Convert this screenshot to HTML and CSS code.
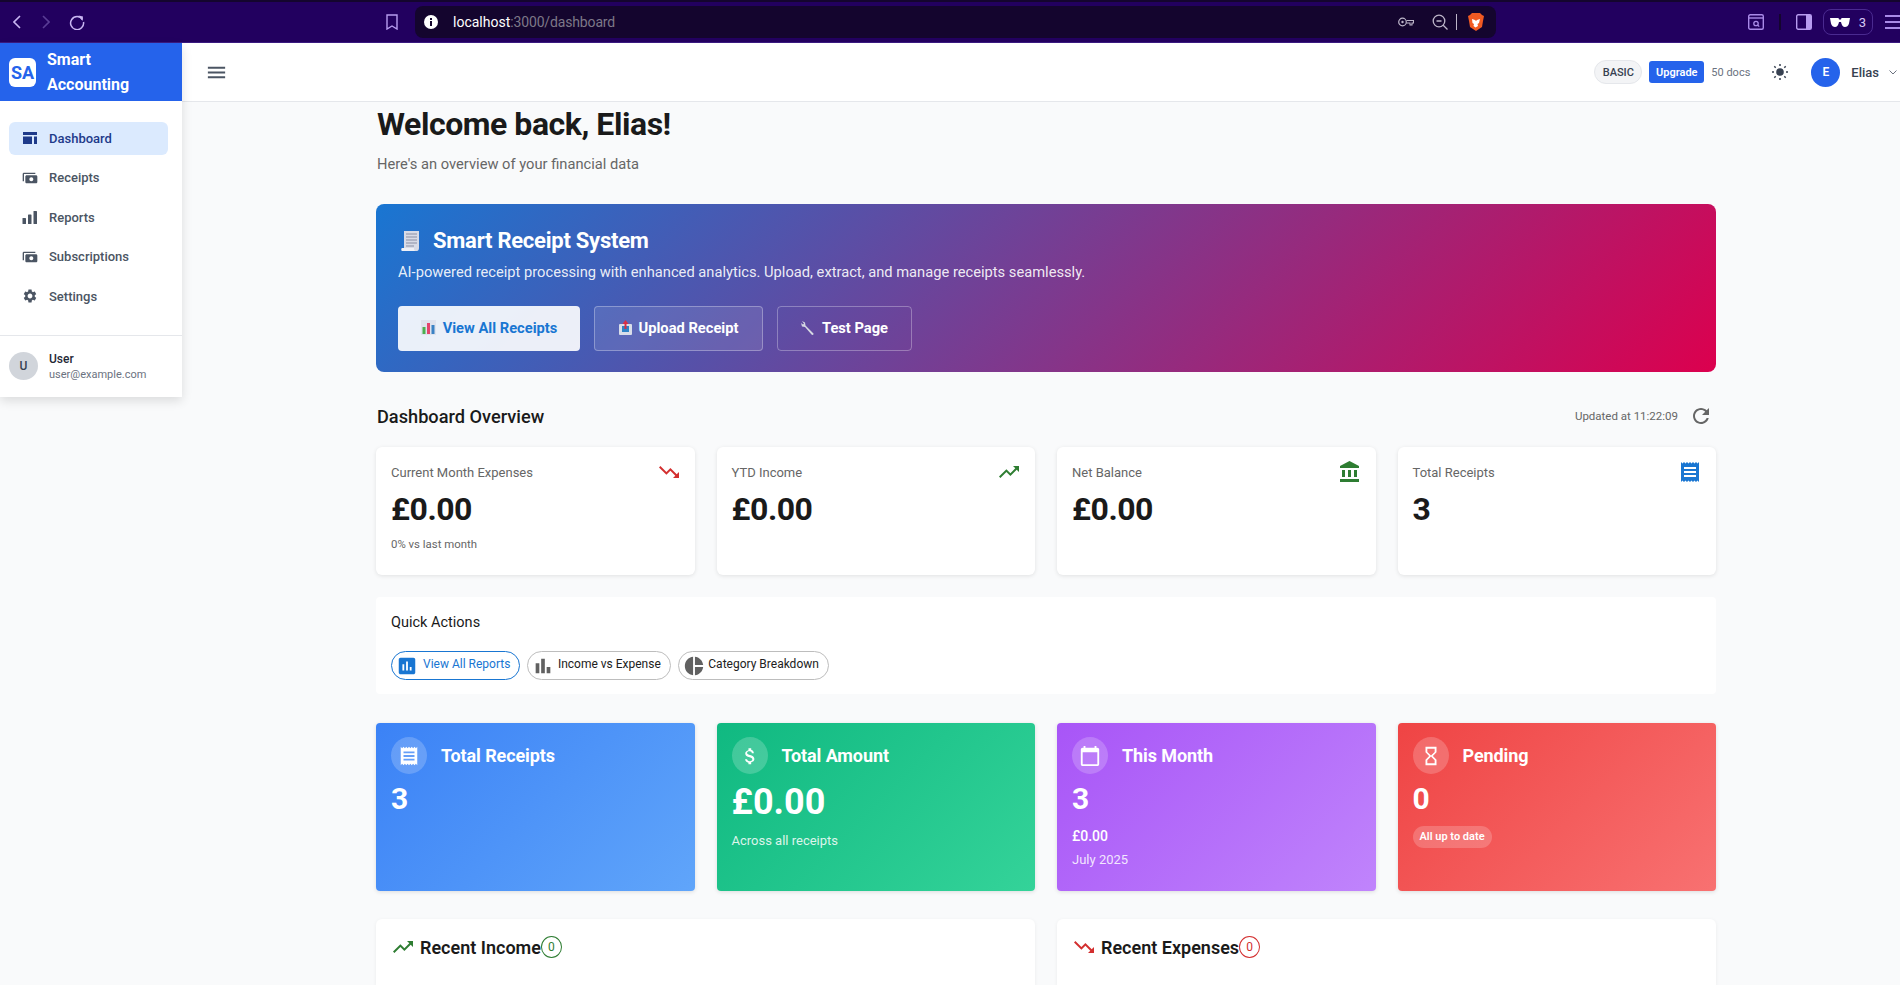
FILE: index.html
```html
<!DOCTYPE html>
<html lang="en">
<head>
    <meta charset="UTF-8">
    <meta name="viewport" content="width=device-width, initial-scale=1.0">
    <title>Smart Accounting Dashboard</title>
    <link rel="stylesheet" href="styles.css">
</head>
<body>
    <!-- browser toolbar -->
    <div class="chrome">
        <svg class="c-ico c-back" viewBox="0 0 8 14" width="8" height="14"><path d="M7 1L1 7l6 6" fill="none" stroke="#c9b6f2" stroke-width="1.6"/></svg>
        <svg class="c-ico c-forward" viewBox="0 0 8 14" width="8" height="14"><path d="M1 1l6 6-6 6" fill="none" stroke="#5a3d96" stroke-width="1.6"/></svg>
        <svg class="c-ico c-reload" viewBox="0 0 16 16" width="16" height="16"><path d="M13.5 5.5A6.5 6.5 0 1 0 14.5 8" fill="none" stroke="#c9b6f2" stroke-width="1.5"/><path d="M9.5 1.5l4.5 1-.5 4.5z" fill="#c9b6f2"/></svg>
        <svg class="c-ico c-bookmark" viewBox="0 0 12 16" width="12" height="16"><path d="M1 1h10v14l-5-3-5 3z" fill="none" stroke="#b79cf0" stroke-width="1.4"/></svg>
        <div class="address">
            <svg viewBox="0 0 14 14" width="14" height="14"><circle cx="7" cy="7" r="7" fill="#fff"/><rect x="6" y="6" width="2" height="5" fill="#14052e"/><rect x="6" y="3" width="2" height="2" fill="#14052e"/></svg>
            <span class="url"><b>localhost</b>:3000/dashboard</span>
            <svg class="a-key" viewBox="0 0 16 10" width="16" height="10"><circle cx="4.5" cy="5" r="3.8" fill="none" stroke="#bdb6c9" stroke-width="1.2"/><circle cx="4.5" cy="5" r="1.2" fill="#bdb6c9"/><path d="M8.5 3.5H15.5V6H14V8H12V6H8.5" fill="none" stroke="#bdb6c9" stroke-width="1.1"/></svg>
            <svg class="a-zoom" viewBox="0 0 16 16" width="16" height="16"><circle cx="7" cy="7" r="5.8" fill="none" stroke="#bdb6c9" stroke-width="1.3"/><path d="M4.5 7h5M11.2 11.2L15.5 15.5" stroke="#bdb6c9" stroke-width="1.3"/></svg>
            <span class="a-sep"></span>
            <svg viewBox="0 0 16 18" width="16" height="18"><path d="M4 0h8l2 2 2 1-1 5-1 6-6 4-6-4-1-6-1-5 2-1z" fill="#f15a22"/><path d="M4 6l3 1 1 1 1-1 3-1-1 4-1.5 1 .5 2-2.500 1.500L5.500 13l.5-2-1.500-1z" fill="#fff"/></svg>
        </div>
        <svg class="c-ico c-search" viewBox="0 0 16 16" width="16" height="16"><rect x=".7" y=".7" width="14.600" height="14.600" rx="1.500" fill="none" stroke="#a98ae8" stroke-width="1.400"/><path d="M1 4h14" stroke="#a98ae8" stroke-width="1.400"/><circle cx="8" cy="9.500" r="2.200" fill="none" stroke="#a98ae8" stroke-width="1.300"/><path d="M9.600 11l1.600 1.600" stroke="#a98ae8" stroke-width="1.300"/></svg>
        <span class="c-sep"></span>
        <svg class="c-ico c-panel" viewBox="0 0 16 16" width="16" height="16"><rect x=".7" y=".7" width="14.600" height="14.600" rx="1.500" fill="none" stroke="#b79cf0" stroke-width="1.400"/><rect x="10" y="1" width="5" height="14" fill="#b79cf0"/></svg>
        <div class="private">
            <svg viewBox="0 0 20 9" width="20" height="9"><path d="M0 0h8.500l.5 1.500h2L11.500 0H20l-1 5.500C18.500 8 16.500 9 15 9c-2 0-3.500-2-4-5H9c-.5 3-2 5-4 5-1.500 0-3.500-1-4-3.500z" fill="#fff"/></svg>
            <span>3</span>
        </div>
        <div class="c-menu"><i></i><i></i><i></i></div>
    </div>

    <div class="app">
        <aside class="sidebar">
            <div class="brand">
                <div class="logo">SA</div>
                <div class="brand-name">Smart<br>Accounting</div>
            </div>
            <nav class="nav">
                <a class="nav-item active">
                    <svg viewBox="0 0 14 12" width="14" height="12"><path d="M0 0h14v3H0zM0 4.500h9V12H0zM11 4.500h3V12h-3z" fill="#1e3a8a"/></svg>
                    Dashboard
                </a>
                <a class="nav-item">
                    <svg viewBox="0 0 24 24" width="16" height="16"><path transform="rotate(180 12 12)" d="M19 14V6c0-1.100-.9-2-2-2H3c-1.100 0-2 .9-2 2v8c0 1.100.9 2 2 2h14c1.100 0 2-.9 2-2zm-9-1c-1.660 0-3-1.340-3-3s1.340-3 3-3 3 1.340 3 3-1.340 3-3 3zm13-6v11c0 1.100-.9 2-2 2H4v-2h17V7h2z" fill="#4b5563"/></svg>
                    Receipts
                </a>
                <a class="nav-item">
                    <svg viewBox="0 0 15 13" width="15" height="13"><rect x="0" y="7" width="3.500" height="6" rx=".6" fill="#4b5563"/><rect x="5.500" y="3.500" width="3.500" height="9.500" rx=".6" fill="#4b5563"/><rect x="11" y="0" width="3.500" height="13" rx=".6" fill="#4b5563"/></svg>
                    Reports
                </a>
                <a class="nav-item">
                    <svg viewBox="0 0 24 24" width="16" height="16"><path transform="rotate(180 12 12)" d="M19 14V6c0-1.100-.9-2-2-2H3c-1.100 0-2 .9-2 2v8c0 1.100.9 2 2 2h14c1.100 0 2-.9 2-2zm-9-1c-1.660 0-3-1.340-3-3s1.340-3 3-3 3 1.340 3 3-1.340 3-3 3zm13-6v11c0 1.100-.9 2-2 2H4v-2h17V7h2z" fill="#4b5563"/></svg>
                    Subscriptions
                </a>
                <a class="nav-item">
                    <svg viewBox="0 0 24 24" width="18" height="18"><path d="M19.140 12.940c.04-.3.06-.61.06-.94 0-.32-.02-.64-.07-.94l2.030-1.580c.18-.14.23-.41.12-.61l-1.920-3.320c-.12-.22-.37-.29-.59-.22l-2.390.96c-.5-.38-1.030-.7-1.620-.94l-.36-2.540c-.04-.24-.24-.41-.48-.41h-3.840c-.24 0-.43.17-.47.41l-.36 2.540c-.59.24-1.130.57-1.620.94l-2.390-.96c-.22-.08-.47 0-.59.22L2.740 8.870c-.12.21-.08.47.12.61l2.030 1.580c-.05.3-.09.63-.09.94s.02.64.07.94l-2.030 1.580c-.18.14-.23.41-.12.61l1.920 3.320c.12.22.37.29.59.22l2.390-.96c.5.38 1.030.7 1.620.94l.36 2.540c.05.24.24.41.48.41h3.840c.24 0 .44-.17.47-.41l.36-2.540c.59-.24 1.130-.56 1.620-.94l2.390.96c.22.08.47 0 .59-.22l1.920-3.320c.12-.22.07-.47-.12-.61l-2.010-1.580zM12 15.600c-1.980 0-3.600-1.620-3.600-3.600s1.620-3.600 3.600-3.600 3.600 1.620 3.600 3.600-1.620 3.600-3.600 3.600z" fill="#4b5563"/></svg>
                    Settings
                </a>
            </nav>
            <div class="side-user">
                <div class="side-avatar">U</div>
                <div class="side-text">
                    <div class="side-name">User</div>
                    <div class="side-mail">user@example.com</div>
                </div>
            </div>
        </aside>

        <div class="main">
            <header class="topbar">
                <svg class="menu-btn" viewBox="0 0 24 24" width="23" height="23"><path d="M3 18h18v-2H3v2zm0-5h18v-2H3v2zm0-7v2h18V6H3z" fill="#4b5563"/></svg>
                <span class="plan">BASIC</span>
                <button class="upgrade">Upgrade</button>
                <span class="docs">50 docs</span>
                <svg class="sun" viewBox="0 0 16 16" width="16" height="16"><circle cx="8" cy="8" r="3.800" fill="#374151"/><path d="M8 0v2M8 14v2M0 8h2M14 8h2M2.300 2.300l1.400 1.400M12.300 12.300l1.400 1.400M2.300 13.700l1.400-1.400M12.300 3.700l1.400-1.400" stroke="#374151" stroke-width="1.500"/></svg>
                <div class="avatar">E</div>
                <span class="user-name">Elias</span>
                <svg class="user-caret" viewBox="0 0 8 5" width="8" height="5"><path d="M.5.5L4 4 7.500.5" fill="none" stroke="#6b7280" stroke-width="1"/></svg>
            </header>

            <main class="content">
                <h1>Welcome back, Elias!</h1>
                <p class="lead">Here's an overview of your financial data</p>

                <section class="banner">
                    <h2>
                        <svg viewBox="0 0 19 22" width="19" height="22"><path d="M3 1h15v17c0 2-1 3-2 3H1c1 0 2-1 2-3z" fill="#d8dbe6"/><path d="M1 21c-1 0-1-3 0-3h12c0 1 0 3 2 3z" fill="#eef0f6"/><path d="M5 4h11M5 7h11M5 10h11M5 13h11M5 16h8" stroke="#8a8fa3" stroke-width="1.200"/></svg>
                        Smart Receipt System
                    </h2>
                    <p>AI-powered receipt processing with enhanced analytics. Upload, extract, and manage receipts seamlessly.</p>
                    <div class="banner-btns">
                        <a class="bbtn primary">
                            <svg viewBox="0 0 15 15" width="15" height="15"><rect width="15" height="15" fill="#dfe3ee"/><rect x="1.500" y="7" width="3" height="7" fill="#4caf50"/><rect x="6" y="3" width="3" height="11" fill="#e5436c"/><rect x="10.500" y="5" width="3" height="9" fill="#3b82c4"/></svg>
                            View All Receipts
                        </a>
                        <a class="bbtn outline tinted">
                            <svg viewBox="0 0 13 15" width="13" height="15"><rect y="4" width="13" height="11" rx="1" fill="#d9dee9"/><rect x="3" y="6" width="7" height="6" fill="#2f84c7"/><path d="M6.500 0L9.500 4H7.500V9H5.500V4H3.500z" fill="#d92f45"/></svg>
                            Upload Receipt
                        </a>
                        <a class="bbtn outline">
                            <svg viewBox="0 0 14 14" width="14" height="14"><path d="M1 0l3 1.500.5 3L12 12c1 1 .5 1.500 0 1.800-.5.300-1 .2-1.500-.3L4 6 1 5.500 0 2l2 1.500 1-.8z" fill="#d5d8e2"/></svg>
                            Test Page
                        </a>
                    </div>
                </section>

                <div class="overview-head">
                    <h3>Dashboard Overview</h3>
                    <div class="updated">
                        Updated at 11:22:09
                        <svg viewBox="0 0 24 24" width="24" height="24"><path d="M17.650 6.350C16.200 4.900 14.210 4 12 4c-4.420 0-7.990 3.580-7.990 8s3.570 8 7.990 8c3.730 0 6.840-2.550 7.730-6h-2.080c-.82 2.330-3.040 4-5.650 4-3.310 0-6-2.690-6-6s2.690-6 6-6c1.660 0 3.140.69 4.220 1.780L13 11h7V4l-2.350 2.350z" fill="#666"/></svg>
                    </div>
                </div>

                <div class="stats">
                    <div class="stat">
                        <div class="stat-top">
                            <span>Current Month Expenses</span>
                            <svg viewBox="0 0 24 24" width="24" height="24"><path d="M16 18l2.290-2.290-4.880-4.880-4 4L2 7.410 3.410 6l6 6 4-4 6.300 6.290L22 12v6z" fill="#d32f2f"/></svg>
                        </div>
                        <div class="stat-value">£0.00</div>
                        <div class="stat-note">0% vs last month</div>
                    </div>
                    <div class="stat">
                        <div class="stat-top">
                            <span>YTD Income</span>
                            <svg viewBox="0 0 24 24" width="24" height="24"><path d="M16 6l2.290 2.290-4.880 4.880-4-4L2 16.590 3.410 18l6-6 4 4 6.300-6.290L22 12V6z" fill="#2e7d32"/></svg>
                        </div>
                        <div class="stat-value">£0.00</div>
                    </div>
                    <div class="stat">
                        <div class="stat-top">
                            <span>Net Balance</span>
                            <svg viewBox="0 0 24 24" width="24" height="24"><path d="M4 10v7h3v-7H4zm6 0v7h3v-7h-3zM2 22h19v-3H2v3zm14-12v7h3v-7h-3zm-4.500-9L2 6v2h19V6l-9.500-5z" fill="#2e7d32"/></svg>
                        </div>
                        <div class="stat-value">£0.00</div>
                    </div>
                    <div class="stat">
                        <div class="stat-top">
                            <span>Total Receipts</span>
                            <svg viewBox="0 0 24 24" width="24" height="24"><path d="M18 17H6v-2h12v2zm0-4H6v-2h12v2zm0-4H6V7h12v2zM3 22l1.500-1.500L6 22l1.500-1.500L9 22l1.500-1.500L12 22l1.500-1.500L15 22l1.500-1.500L18 22l1.500-1.500L21 22V2l-1.500 1.500L18 2l-1.500 1.500L15 2l-1.500 1.500L12 2l-1.500 1.500L9 2 7.500 3.500 6 2 4.500 3.500 3 2v20z" fill="#1976d2"/></svg>
                        </div>
                        <div class="stat-value">3</div>
                    </div>
                </div>

                <section class="quick">
                    <h4>Quick Actions</h4>
                    <div class="chips">
                        <a class="chip blue">
                            <svg viewBox="0 0 24 24" width="22" height="22"><path d="M19 3H5c-1.100 0-2 .9-2 2v14c0 1.100.9 2 2 2h14c1.100 0 2-.9 2-2V5c0-1.100-.9-2-2-2zM9 17H7v-7h2v7zm4 0h-2V7h2v10zm4 0h-2v-4h2v4z" fill="#1976d2"/></svg>
                            View All Reports
                        </a>
                        <a class="chip">
                            <svg viewBox="0 0 24 24" width="22" height="22"><path d="M4 9h4v11H4zm12 4h4v7h-4zm-6-9h4v16h-4z" fill="#616161"/></svg>
                            Income vs Expense
                        </a>
                        <a class="chip">
                            <svg viewBox="0 0 24 24" width="22" height="22"><path d="M11 2v20c-5.070-.5-9-4.790-9-10s3.930-9.500 9-10zm2.030 0v8.990H22c-.47-4.740-4.240-8.520-8.970-8.990zm0 11.010V22c4.740-.47 8.500-4.250 8.970-8.990h-8.970z" fill="#616161"/></svg>
                            Category Breakdown
                        </a>
                    </div>
                </section>

                <div class="tiles">
                    <div class="tile t-blue">
                        <div class="tile-head">
                            <span class="tile-ico"><svg viewBox="0 0 24 24" width="22" height="22"><path d="M18 17H6v-2h12v2zm0-4H6v-2h12v2zm0-4H6V7h12v2zM3 22l1.500-1.500L6 22l1.500-1.500L9 22l1.500-1.500L12 22l1.500-1.500L15 22l1.500-1.500L18 22l1.500-1.500L21 22V2l-1.500 1.500L18 2l-1.500 1.500L15 2l-1.500 1.500L12 2l-1.500 1.500L9 2 7.500 3.500 6 2 4.500 3.500 3 2v20z" fill="#fff"/></svg></span>
                            Total Receipts
                        </div>
                        <div class="tile-value">3</div>
                    </div>
                    <div class="tile t-green">
                        <div class="tile-head">
                            <span class="tile-ico"><svg viewBox="0 0 24 24" width="22" height="22"><path d="M11.800 10.900c-2.270-.59-3-1.200-3-2.150 0-1.090 1.010-1.850 2.700-1.850 1.780 0 2.440.85 2.500 2.100h2.210c-.07-1.720-1.120-3.300-2.910-3.740V3.500h-3v2.160c-1.940.42-3.500 1.680-3.500 3.610 0 2.310 1.910 3.460 4.700 4.130 2.500.6 3 1.480 3 2.410 0 .69-.49 1.790-2.700 1.790-2.060 0-2.870-.92-2.980-2.100h-2.200c.12 2.190 1.760 3.420 3.680 3.830V21h3v-2.150c1.950-.37 3.500-1.500 3.500-3.550 0-2.840-2.430-3.810-4.700-4.400z" fill="#fff"/></svg></span>
                            Total Amount
                        </div>
                        <div class="tile-value big">£0.00</div>
                        <div class="tile-note">Across all receipts</div>
                    </div>
                    <div class="tile t-purple">
                        <div class="tile-head">
                            <span class="tile-ico"><svg viewBox="0 0 24 24" width="22" height="22"><path d="M20 3h-1V1h-2v2H7V1H5v2H4c-1.100 0-2 .9-2 2v16c0 1.100.9 2 2 2h16c1.100 0 2-.9 2-2V5c0-1.100-.9-2-2-2zm0 18H4V8h16v13z" fill="#fff"/></svg></span>
                            This Month
                        </div>
                        <div class="tile-value">3</div>
                        <div class="tile-amount">£0.00</div>
                        <div class="tile-date">July 2025</div>
                    </div>
                    <div class="tile t-red">
                        <div class="tile-head">
                            <span class="tile-ico"><svg viewBox="0 0 24 24" width="22" height="22"><path d="M6 2v6h.01L6 8.010 10 12l-4 4 .01.01H6V22h12v-5.990h-.01L18 16l-4-4 4-3.990-.01-.01H18V2H6zm10 14.500V20H8v-3.500l4-4 4 4zm-4-5l-4-4V4h8v3.500l-4 4z" fill="#fff"/></svg></span>
                            Pending
                        </div>
                        <div class="tile-value">0</div>
                        <span class="tile-pill">All up to date</span>
                    </div>
                </div>

                <div class="recent">
                    <section class="recent-card">
                        <h3>
                            <svg viewBox="0 0 24 24" width="24" height="24"><path d="M16 6l2.290 2.290-4.880 4.880-4-4L2 16.590 3.410 18l6-6 4 4 6.300-6.290L22 12V6z" fill="#2e7d32"/></svg>
                            <span>Recent Income</span>
                            <span class="count c-green">0</span>
                        </h3>
                    </section>
                    <section class="recent-card">
                        <h3>
                            <svg viewBox="0 0 24 24" width="24" height="24"><path d="M16 18l2.290-2.290-4.880-4.880-4 4L2 7.410 3.410 6l6 6 4-4 6.300 6.290L22 12v6z" fill="#d32f2f"/></svg>
                            <span>Recent Expenses</span>
                            <span class="count c-red">0</span>
                        </h3>
                    </section>
                </div>
            </main>
        </div>
    </div>
</body>
</html>
```

FILE: styles.css
```css
html, body {
    margin: 0;
    height: 100%;
    overflow: hidden;
}

body {
    font-family: Roboto, "Liberation Sans", sans-serif;
    background-color: #f9fafb;
    color: #1a1a1a;
}

/* browser toolbar */
.chrome {
    height: 43px;
    box-sizing: border-box;
    display: flex;
    align-items: center;
    background-color: #22005f;
    border-top: 2px solid #14052e;
    border-bottom: 1px solid #3a1a80;
}

.c-ico { flex: none; }
.c-back { margin-left: 13px; }
.c-forward { margin-left: 21px; }
.c-reload { margin-left: 19px; }
.c-bookmark { margin-left: 301px; }

.address {
    width: 1081px;
    height: 32px;
    margin-left: 17px;
    display: flex;
    align-items: center;
    background-color: #14052e;
    border-radius: 8px;
    padding: 0 12px 0 9px;
    box-sizing: border-box;
}

.url {
    font-size: 14px;
    letter-spacing: -0.15px;
    color: #7d7888;
    margin-left: 15px;
    flex: 1;
}

.url b {
    font-weight: 400;
    letter-spacing: 0;
    color: #fff;
}

.a-zoom { margin-left: 18px; }

.a-sep {
    width: 1px;
    height: 16px;
    background-color: #bdb6c9;
    margin: 0 11px 0 8px;
}

.c-search { margin-left: 252px; }

.c-sep {
    width: 2px;
    height: 16px;
    background-color: #14052e;
    margin: 0 15px;
}

.private {
    width: 50px;
    height: 26px;
    box-sizing: border-box;
    margin-left: 11px;
    border: 1px solid #4a2a90;
    border-radius: 8px;
    display: flex;
    align-items: center;
    justify-content: center;
    gap: 9px;
    color: #d6c8f5;
    font-size: 13px;
}

.c-menu {
    margin-left: 12px;
    flex: 1;
    display: flex;
    flex-direction: column;
    gap: 4px;
}

.c-menu i {
    display: block;
    height: 2px;
    background-color: #a98ae8;
}

/* layout */
.app {
    display: flex;
    align-items: flex-start;
    height: 942px;
}

.sidebar {
    width: 182px;
    flex: none;
    background-color: #fff;
    box-shadow: 0 4px 10px rgba(0, 0, 0, 0.12);
    position: relative;
}

.brand {
    height: 58px;
    background-color: #2563eb;
    display: flex;
    align-items: center;
    padding-left: 9px;
    gap: 11px;
}

.logo {
    width: 27px;
    height: 29px;
    background-color: #fff;
    border-radius: 6px;
    color: #2563eb;
    font-size: 18px;
    font-weight: 700;
    display: flex;
    align-items: center;
    justify-content: center;
}

.brand-name {
    color: #fff;
    font-size: 16px;
    font-weight: 700;
    line-height: 25px;
}

.nav {
    padding: 21px 14px 15px 9px;
}

.nav-item {
    height: 33px;
    box-sizing: border-box;
    margin-bottom: 6.6px;
    padding: 0 0 1px 13px;
    border-radius: 6px;
    display: flex;
    align-items: center;
    font-size: 13px;
    font-weight: 500;
    color: #4b5563;
}

.nav-item svg {
    width: 16px;
    margin-right: 11px;
    flex: none;
}

.nav-item.active {
    background-color: #dbeafe;
    color: #1e3a8a;
}

.side-user {
    height: 62px;
    box-sizing: border-box;
    border-top: 1px solid #e5e7eb;
    padding-left: 9px;
    display: flex;
    align-items: center;
    gap: 11px;
}

.side-avatar {
    width: 29px;
    height: 28px;
    border-radius: 50%;
    background-color: #d1d5db;
    color: #374151;
    font-size: 12px;
    font-weight: 500;
    display: flex;
    align-items: center;
    justify-content: center;
}

.side-text { padding-top: 1px; }

.side-name {
    font-size: 12px;
    font-weight: 500;
    color: #1f2937;
    line-height: 15px;
}

.side-mail {
    font-size: 11px;
    color: #6b7280;
    line-height: 15px;
}

.main {
    flex: 1;
    min-width: 0;
}

/* top bar */
.topbar {
    height: 59px;
    box-sizing: border-box;
    background-color: #fff;
    border-bottom: 1px solid #e5e7eb;
    display: flex;
    align-items: center;
    padding-left: 23px;
}

.menu-btn { margin-right: auto; }

.plan {
    height: 24px;
    width: 48px;
    box-sizing: border-box;
    border: 1px solid #e5e7eb;
    background-color: #f3f4f6;
    border-radius: 12px;
    font-size: 11px;
    font-weight: 500;
    color: #374151;
    display: flex;
    align-items: center;
    justify-content: center;
}

.upgrade {
    width: 55px;
    height: 22px;
    margin-left: 7px;
    padding: 0;
    border: none;
    border-radius: 3px;
    background-color: #2563eb;
    color: #fff;
    font-family: inherit;
    font-size: 11px;
    font-weight: 600;
}

.docs {
    margin-left: 7px;
    font-size: 11px;
    color: #6b7280;
}

.sun { margin-left: 22px; }

.avatar {
    width: 29px;
    height: 29px;
    margin-left: 23px;
    border-radius: 50%;
    background-color: #2563eb;
    color: #fff;
    font-size: 12px;
    font-weight: 600;
    display: flex;
    align-items: center;
    justify-content: center;
}

.user-name {
    margin-left: 11px;
    font-size: 13px;
    font-weight: 500;
    color: #374151;
}

.user-caret {
    margin: 0 3px 0 10px;
}

/* page content */
.content {
    width: 1340px;
    margin-left: 194px;
    padding-top: 3px;
}

h1 {
    margin: 0 0 0 1px;
    font-size: 32px;
    line-height: 38px;
    font-weight: 700;
    letter-spacing: -0.45px;
}

.lead {
    margin: 11px 0 0 1px;
    font-size: 14.7px;
    line-height: 20px;
    color: #666;
}

.banner {
    margin-top: 30px;
    height: 168px;
    box-sizing: border-box;
    padding: 22px 22px 21px;
    border-radius: 8px;
    color: #fff;
    background: linear-gradient(135deg, #1976d2, #dc004e);
}

.banner h2 {
    margin: 0;
    display: flex;
    align-items: center;
    font-size: 22px;
    line-height: 30px;
    font-weight: 700;
    letter-spacing: -0.25px;
}

.banner h2 svg {
    margin: 0 13px 0 3px;
}

.banner p {
    margin: 6px 0 0;
    font-size: 14.7px;
    line-height: 20px;
    color: rgba(255, 255, 255, 0.9);
}

.banner-btns {
    display: flex;
    gap: 14px;
    margin-top: 24px;
}

.bbtn {
    height: 45px;
    box-sizing: border-box;
    padding-bottom: 2px;
    border-radius: 4px;
    display: flex;
    align-items: center;
    justify-content: center;
    gap: 7px;
    font-size: 14.7px;
    font-weight: 700;
}

.bbtn.primary {
    width: 182px;
    background-color: rgba(255, 255, 255, 0.9);
    color: #1976d2;
}

.bbtn.outline {
    border: 1px solid rgba(255, 255, 255, 0.3);
    color: #fff;
}

.bbtn.tinted {
    width: 169px;
    background-color: rgba(255, 255, 255, 0.1);
}

.bbtn.outline:last-child { width: 135px; }

.overview-head {
    margin-top: 32px;
    height: 24px;
    padding-left: 1px;
    display: flex;
    align-items: center;
    justify-content: space-between;
}

.overview-head h3 {
    margin: 0;
    font-size: 18.2px;
    font-weight: 500;
}

.updated {
    display: flex;
    align-items: center;
    gap: 11px;
    font-size: 11.5px;
    color: #666;
    margin-right: 3px;
}

.stats, .tiles, .recent {
    display: grid;
    gap: 22px;
}

.stats, .tiles {
    grid-template-columns: repeat(4, 1fr);
}

.stats { margin-top: 19px; }

.stat {
    height: 128px;
    box-sizing: border-box;
    padding: 13px 14px 0 15px;
    background-color: #fff;
    border-radius: 6px;
    box-shadow: 0 1px 4px rgba(0, 0, 0, 0.1);
}

.stat-top {
    display: flex;
    align-items: center;
    justify-content: space-between;
    font-size: 13px;
    color: #666;
}

.stat-value {
    margin-top: 6px;
    font-size: 32px;
    line-height: 38px;
    font-weight: 700;
    letter-spacing: -0.5px;
}

.stat-note {
    margin-top: 9px;
    font-size: 11.4px;
    line-height: 14px;
    color: #666;
}

.quick {
    margin-top: 22px;
    height: 97px;
    box-sizing: border-box;
    padding: 16px 15px 0;
    background-color: #fff;
    border-radius: 4px;
}

.quick h4 {
    margin: 0;
    font-size: 14.5px;
    line-height: 20px;
    font-weight: 400;
}

.chips {
    display: flex;
    gap: 7px;
    margin-top: 18px;
}

.chip {
    height: 29px;
    box-sizing: border-box;
    padding: 0 9px 3px 4px;
    border: 1px solid #bdbdbd;
    border-radius: 15px;
    display: flex;
    align-items: center;
    gap: 5px;
    font-size: 12px;
    color: #212121;
}

.chip svg { margin-top: 3px; }
.chip:not(.blue) { gap: 3.500px; }

.chip.blue {
    border-color: #1976d2;
    color: #1976d2;
}

.tiles { margin-top: 29px; }

.tile {
    height: 168px;
    box-sizing: border-box;
    padding: 14px 15px 0;
    border-radius: 4px;
    color: #fff;
    box-shadow: 0 1px 4px rgba(0, 0, 0, 0.12);
}

.t-blue { background: linear-gradient(135deg, #3b82f6, #60a5fa); }
.t-green { background: linear-gradient(135deg, #10b981, #34d399); }
.t-purple { background: linear-gradient(135deg, #a855f7, #c084fc); }
.t-red { background: linear-gradient(135deg, #ef4444, #f87171); }

.tile-head {
    display: flex;
    align-items: center;
    gap: 14px;
    font-size: 18px;
    font-weight: 700;
    letter-spacing: -0.1px;
}

.tile-ico {
    width: 36px;
    height: 37px;
    border-radius: 50%;
    background-color: rgba(255, 255, 255, 0.2);
    display: flex;
    align-items: center;
    justify-content: center;
}

.tile-value {
    margin-top: 7px;
    font-size: 30px;
    line-height: 36px;
    font-weight: 700;
}

.tile-value.big {
    font-size: 36px;
    line-height: 42px;
}

.tile-note {
    margin-top: 10px;
    font-size: 13px;
    line-height: 16px;
    color: rgba(255, 255, 255, 0.85);
}

.tile-amount {
    margin-top: 10px;
    font-size: 14px;
    line-height: 18px;
    font-weight: 500;
}

.tile-date {
    margin-top: 7px;
    font-size: 13px;
    line-height: 16px;
    color: rgba(255, 255, 255, 0.85);
}

.tile-pill {
    display: inline-block;
    margin-top: 9px;
    padding: 0 7px;
    height: 22px;
    line-height: 22px;
    border-radius: 11px;
    background-color: rgba(255, 255, 255, 0.2);
    font-size: 11px;
    font-weight: 600;
}

.recent {
    margin-top: 28px;
    grid-template-columns: repeat(2, 1fr);
}

.recent-card {
    height: 67px;
    box-sizing: border-box;
    padding: 16px 15px 0;
    background-color: #fff;
    border-radius: 6px 6px 0 0;
    box-shadow: 0 1px 4px rgba(0, 0, 0, 0.06);
}

.recent-card h3 {
    margin: 0;
    display: flex;
    align-items: center;
    font-size: 18px;
    font-weight: 600;
    height: 24px;
}

.recent-card h3 svg { margin-right: 5px; }

.count {
    width: 21px;
    height: 22px;
    box-sizing: border-box;
    border: 1px solid;
    border-radius: 50%;
    font-size: 12px;
    font-weight: 400;
    display: flex;
    align-items: center;
    justify-content: center;
}

.c-green { color: #2e7d32; }
.c-red { color: #d32f2f; }
```
